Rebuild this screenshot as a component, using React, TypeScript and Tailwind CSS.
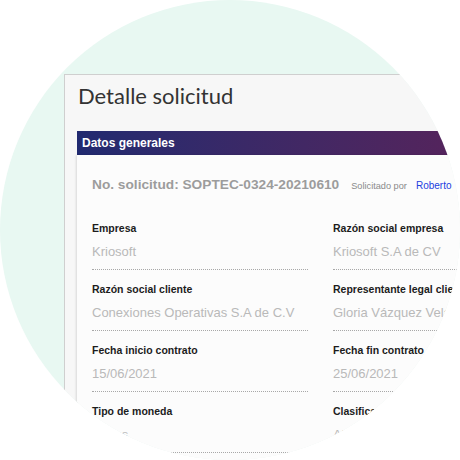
const rows = [
  [
    { label: 'Empresa', value: 'Kriosoft' },
    { label: 'Razón social empresa', value: 'Kriosoft S.A de CV' }
  ],
  [
    { label: 'Razón social cliente', value: 'Conexiones Operativas S.A de C.V' },
    { label: 'Representante legal cliente', value: 'Gloria Vázquez Velázquez' }
  ],
  [
    { label: 'Fecha inicio contrato', value: '15/06/2021' },
    { label: 'Fecha fin contrato', value: '25/06/2021' }
  ],
  [
    { label: 'Tipo de moneda', value: 'Pesos' },
    { label: 'Clasificación', value: 'Alta' }
  ]
];

function Field({ label, value }: { label: string; value: string }) {
  return (
    <div className="pt-[12px] whitespace-nowrap">
      <div className="text-[10.5px] leading-[14px] font-bold text-[#1c1c1c]">{label}</div>
      <div className="mt-[8px] text-[13px] leading-[18px] text-[#b9b9b9]">{value}</div>
      <div className="mt-[8px] border-b border-dotted border-[#a8a8a8]"></div>
    </div>
  );
}

export default function App() {
  return (
    <div className="w-[460px] h-[460px] bg-white font-['Liberation_Sans',Arial,sans-serif]">
      <div className="w-[460px] h-[460px] rounded-full overflow-hidden bg-[#e8f8f2] pl-[64px] pt-[74px]">
        <div className="w-[460px] h-[460px] bg-[#f7f7f7] border-t border-l border-[#cfcfcf]">
          <h1 className="pl-[13px] pt-[6px] text-[22px] leading-[30px] text-[#333] font-['Lato',sans-serif]">
            Detalle solicitud
          </h1>

          <div className="ml-[12px] mt-[20px]">
            <div className="h-[24px] pl-[5px] bg-gradient-to-r from-[#212a70] to-[#5c2058] text-white text-[12px] leading-[24px] font-bold">
              Datos generales
            </div>
            <div className="bg-[#fcfcfc] pl-[15px] pt-[20px] h-[400px] shadow-[-1px_0_2px_rgba(0,0,0,0.12)]">
              <div className="flex items-baseline whitespace-nowrap leading-[20px]">
                <span className="text-[13.7px] font-bold text-[#9c9c9c]">No. solicitud: SOPTEC-0324-20210610</span>
                <span className="ml-[12px] text-[9.2px] text-[#8a8a8a]">Solicitado por</span>
                <span className="ml-[9px] text-[10px] text-[#2340e0]">Roberto</span>
              </div>

              <div className="mt-[13px] grid grid-cols-[216px_216px] gap-x-[25px]">
                {rows.map((row, i) =>
                  row.map((f, j) => <Field key={`${i}-${j}`} label={f.label} value={f.value} />)
                )}
              </div>
            </div>
          </div>
        </div>
      </div>
    </div>
  );
}
